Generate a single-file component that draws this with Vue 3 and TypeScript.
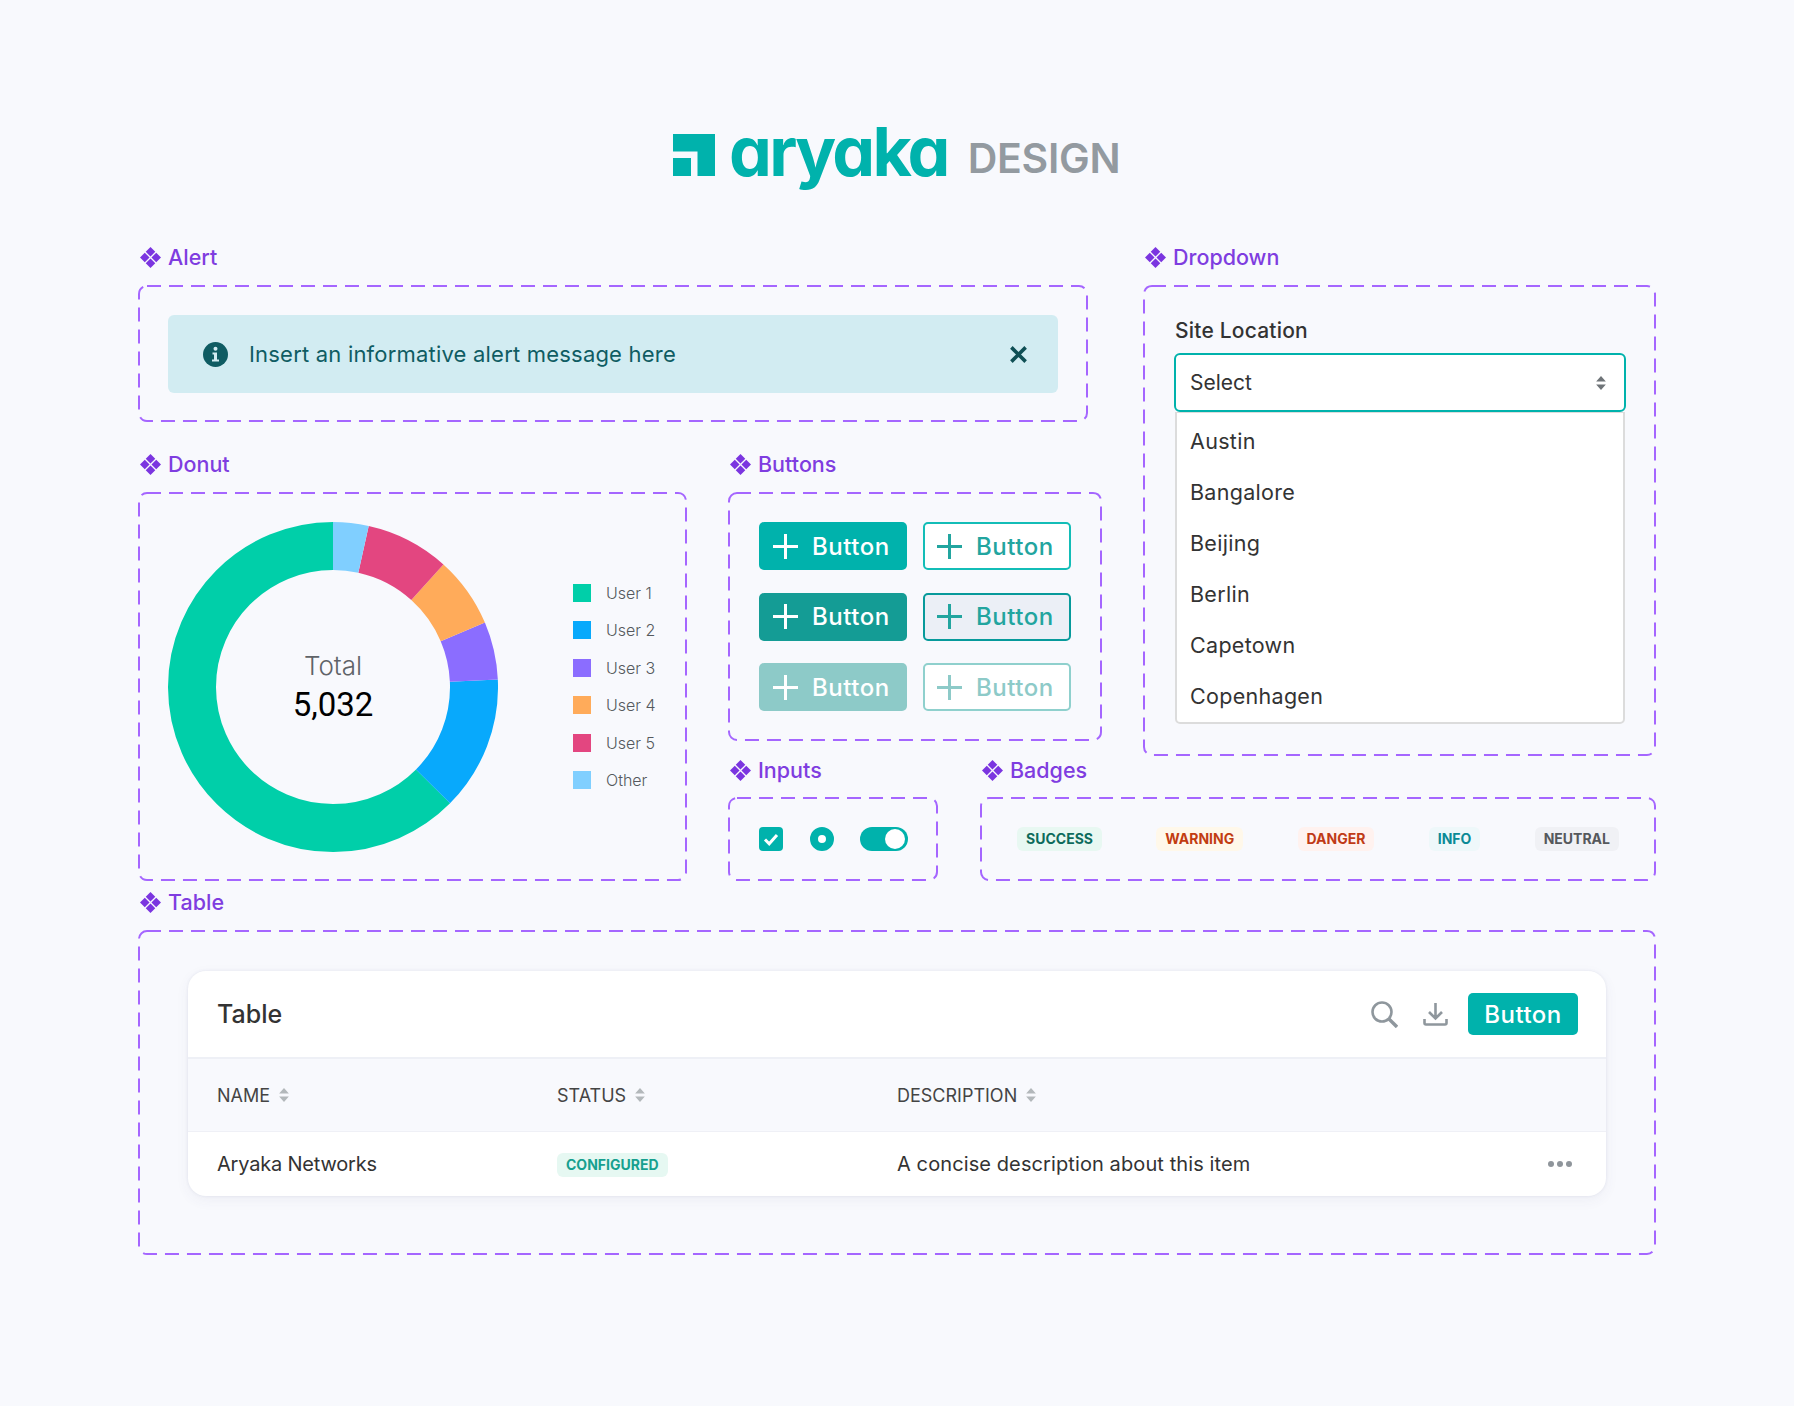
<script setup lang="ts">
interface Slice {
  label: string
  color: string
  start: number
  sweep: number
}

const radius = 141
const circumference = 2 * Math.PI * radius

const slices: Slice[] = [
  { label: 'User 1', color: '#00cfa9', start: 134.8, sweep: 225.2 },
  { label: 'User 2', color: '#08a9fc', start: 87.4, sweep: 47.4 },
  { label: 'User 3', color: '#8b6dff', start: 67, sweep: 20.4 },
  { label: 'User 4', color: '#ffab5a', start: 42, sweep: 25 },
  { label: 'User 5', color: '#e34680', start: 12.5, sweep: 29.5 },
  { label: 'Other', color: '#80cfff', start: 0, sweep: 12.5 },
]

const buttonRows = [
  { solid: 'solid', outline: 'outline' },
  { solid: 'solid hover', outline: 'outline hover' },
  { solid: 'solid disabled', outline: 'outline disabled' },
]

const locations = ['Austin', 'Bangalore', 'Beijing', 'Berlin', 'Capetown', 'Copenhagen']

const badges = [
  { text: 'Success', kind: 'success' },
  { text: 'Warning', kind: 'warning' },
  { text: 'Danger', kind: 'danger' },
  { text: 'Info', kind: 'info' },
  { text: 'Neutral', kind: 'neutral' },
]

const columns = ['Name', 'Status', 'Description']

const dash = (sweep: number) => `${(sweep / 360) * circumference} ${circumference}`
</script>

<template>
  <div class="page">
    <header class="brand">
      <svg class="mark" viewBox="0 0 42 42" aria-hidden="true">
        <path d="M0 0H42V42H24.500V17.500H0Z M0 24H18V42H0Z" fill="#00b2ac" />
      </svg>
      <span class="wordmark">aryaka</span>
      <span class="design">DESIGN</span>
    </header>

    <div class="board">
      <section class="group alert-group">
        <h2 class="label">
          <svg viewBox="0 0 22 22" aria-hidden="true"><path d="M11 0l5 5-5 5-5-5z M5 6l5 5-5 5-5-5z M17 6l5 5-5 5-5-5z M11 12l5 5-5 5-5-5z" /></svg>
          Alert
        </h2>
        <div class="box alert-box">
          <svg class="dash"><rect /></svg>
          <div class="alert">
            <svg class="alert-icon" viewBox="0 0 25 25" aria-hidden="true">
              <circle cx="12.500" cy="12.500" r="12.500" fill="#0f5c63" />
              <circle cx="12.500" cy="6.800" r="2" fill="#d2ecf2" />
              <path d="M9.500 10.500h4.500v7h2v2h-7v-2h2v-5h-1.500z" fill="#d2ecf2" />
            </svg>
            <span class="alert-text">Insert an informative alert message here</span>
            <svg class="alert-close" viewBox="0 0 16 16" aria-hidden="true">
              <path d="M2 2l12 12M14 2L2 14" />
            </svg>
          </div>
        </div>
      </section>

      <section class="group dropdown-group">
        <h2 class="label">
          <svg viewBox="0 0 22 22" aria-hidden="true"><path d="M11 0l5 5-5 5-5-5z M5 6l5 5-5 5-5-5z M17 6l5 5-5 5-5-5z M11 12l5 5-5 5-5-5z" /></svg>
          Dropdown
        </h2>
        <div class="box dropdown-box">
          <svg class="dash"><rect /></svg>
          <div class="field-label">Site Location</div>
          <div class="select">
            <span>Select</span>
            <svg class="select-caret" viewBox="0 0 9 13" aria-hidden="true">
              <path d="M4.500 0L9 5H0z M4.500 13L0 8h9z" />
            </svg>
          </div>
          <ul class="menu">
            <li v-for="location in locations" :key="location">{{ location }}</li>
          </ul>
        </div>
      </section>

      <section class="group donut-group">
        <h2 class="label">
          <svg viewBox="0 0 22 22" aria-hidden="true"><path d="M11 0l5 5-5 5-5-5z M5 6l5 5-5 5-5-5z M17 6l5 5-5 5-5-5z M11 12l5 5-5 5-5-5z" /></svg>
          Donut
        </h2>
        <div class="box donut-box">
          <svg class="dash"><rect /></svg>
          <div class="donut">
            <svg viewBox="0 0 330 330" aria-hidden="true">
              <circle
                v-for="slice in slices"
                :key="slice.label"
                cx="165"
                cy="165"
                :r="radius"
                fill="none"
                stroke-width="48"
                :stroke="slice.color"
                :stroke-dasharray="dash(slice.sweep)"
                :transform="`rotate(${slice.start - 90} 165 165)`"
              />
            </svg>
            <div class="donut-center">
              <span class="donut-title">Total</span>
              <span class="donut-value">5,032</span>
            </div>
          </div>
          <ul class="legend">
            <li v-for="slice in slices" :key="slice.label">
              <i :style="{ background: slice.color }"></i>{{ slice.label }}
            </li>
          </ul>
        </div>
      </section>

      <section class="group buttons-group">
        <h2 class="label">
          <svg viewBox="0 0 22 22" aria-hidden="true"><path d="M11 0l5 5-5 5-5-5z M5 6l5 5-5 5-5-5z M17 6l5 5-5 5-5-5z M11 12l5 5-5 5-5-5z" /></svg>
          Buttons
        </h2>
        <div class="box buttons-box">
          <svg class="dash"><rect /></svg>
          <template v-for="row in buttonRows" :key="row.solid">
            <button :class="['btn', row.solid]">
              <svg viewBox="0 0 25 25" aria-hidden="true"><path d="M12.500 0v25M0 12.500h25" /></svg>
              Button
            </button>
            <button :class="['btn', row.outline]">
              <svg viewBox="0 0 25 25" aria-hidden="true"><path d="M12.500 0v25M0 12.500h25" /></svg>
              Button
            </button>
          </template>
        </div>
      </section>

      <section class="group inputs-group">
        <h2 class="label">
          <svg viewBox="0 0 22 22" aria-hidden="true"><path d="M11 0l5 5-5 5-5-5z M5 6l5 5-5 5-5-5z M17 6l5 5-5 5-5-5z M11 12l5 5-5 5-5-5z" /></svg>
          Inputs
        </h2>
        <div class="box inputs-box">
          <svg class="dash"><rect /></svg>
          <span class="checkbox">
            <svg viewBox="0 0 24 24" aria-hidden="true"><path d="M6 12.500l4.200 4.200L18 8" /></svg>
          </span>
          <span class="radio"></span>
          <span class="toggle"></span>
        </div>
      </section>

      <section class="group badges-group">
        <h2 class="label">
          <svg viewBox="0 0 22 22" aria-hidden="true"><path d="M11 0l5 5-5 5-5-5z M5 6l5 5-5 5-5-5z M17 6l5 5-5 5-5-5z M11 12l5 5-5 5-5-5z" /></svg>
          Badges
        </h2>
        <div class="box badges-box">
          <svg class="dash"><rect /></svg>
          <span v-for="badge in badges" :key="badge.kind" :class="['badge', badge.kind]">{{ badge.text }}</span>
        </div>
      </section>
    </div>

    <section class="group table-group">
      <h2 class="label">
        <svg viewBox="0 0 22 22" aria-hidden="true"><path d="M11 0l5 5-5 5-5-5z M5 6l5 5-5 5-5-5z M17 6l5 5-5 5-5-5z M11 12l5 5-5 5-5-5z" /></svg>
        Table
      </h2>
      <div class="box table-box">
        <svg class="dash"><rect /></svg>
        <div class="card">
          <div class="card-head">
            <span class="card-title">Table</span>
            <svg class="tool search" viewBox="0 0 27 27" aria-hidden="true">
              <circle cx="11" cy="11" r="9.500" />
              <path d="M18 18l8 8" stroke-width="3.400" />
            </svg>
            <svg class="tool download" viewBox="0 0 25 24" aria-hidden="true">
              <path d="M12.500 1v15M6 10l6.500 6.500L19 10" />
              <path d="M1.500 17v4c0 1 .5 1.500 1.500 1.500h19c1 0 1.500-.5 1.500-1.500v-4" />
            </svg>
            <button class="btn solid small">Button</button>
          </div>
          <div class="row head-row">
            <span v-for="column in columns" :key="column" class="head-cell">
              {{ column }}
              <svg viewBox="0 0 9 13" aria-hidden="true"><path d="M4.500 0L9 5H0z M4.500 13L0 8h9z" /></svg>
            </span>
          </div>
          <div class="row body-row">
            <span class="name-cell">Aryaka Networks</span>
            <span><span class="badge configured">Configured</span></span>
            <span class="desc-cell">A concise description about this item</span>
            <span class="dots"><i></i><i></i><i></i></span>
          </div>
        </div>
      </div>
    </section>
  </div>
</template>

<style>
html,
body {
  margin: 0;
  background: #f8f9fd;
}
</style>

<style scoped>
.page {
  box-sizing: border-box;
  width: 1794px;
  height: 1406px;
  padding: 127px 138px 0 138px;
  font-family: Inter, "Liberation Sans", sans-serif;
  color: #333;
}

/* logo */
.brand {
  display: flex;
  align-items: flex-end;
  height: 64px;
  padding-left: 535px;
  margin-bottom: 53px;
}

.mark {
  width: 42px;
  height: 42px;
  margin-bottom: 15px;
}

.wordmark {
  margin-left: 14px;
  margin-bottom: 8px;
  font-size: 68px;
  line-height: 64px;
  font-weight: 700;
  letter-spacing: -2.700px;
  color: #00b2ac;
  font-feature-settings: "cv11";
}

.design {
  margin-left: 20px;
  margin-bottom: 8px;
  font-size: 41px;
  line-height: 50px;
  font-weight: 600;
  letter-spacing: -0.300px;
  color: #939aa0;
}

/* grid of groups */
.board {
  display: grid;
  grid-template-columns: 549px 41px 210px 42px 108px 14px 41px 513px;
  grid-template-rows: 178px 303px 124px;
  row-gap: 16px;
}

.group {
  display: flex;
  flex-direction: column;
  min-width: 0;
}

.alert-group {
  grid-column: 1 / 6;
  grid-row: 1;
}

.dropdown-group {
  grid-column: 8 / 9;
  grid-row: 1 / 3;
  margin-bottom: -15px;
}

.donut-group {
  grid-column: 1 / 2;
  grid-row: 2 / 4;
  margin-top: 13px;
}

.buttons-group {
  grid-column: 3 / 7;
  grid-row: 2;
  margin-top: 13px;
}

.inputs-group {
  grid-column: 3 / 4;
  grid-row: 3;
}

.badges-group {
  grid-column: 5 / 9;
  grid-row: 3;
}

.table-group {
  margin-top: 8px;
  height: 366px;
}

.label {
  display: flex;
  align-items: center;
  gap: 7px;
  height: 26px;
  margin: 0 0 15px;
  font-size: 21.500px;
  font-weight: 500;
  color: #7f3de0;
}

.inputs-group .label,
.badges-group .label {
  margin-bottom: 14px;
}

.label svg {
  width: 21px;
  height: 21px;
  margin-left: 2px;
  fill: #7b35e0;
}

.box {
  position: relative;
  flex: 1;
  box-sizing: border-box;
}

.dash {
  position: absolute;
  inset: 0;
  width: 100%;
  height: 100%;
  pointer-events: none;
}

.dash rect {
  x: 1px;
  y: 1px;
  width: calc(100% - 2px);
  height: calc(100% - 2px);
  rx: 8px;
  fill: none;
  stroke: #a566ff;
  stroke-width: 2;
  stroke-dasharray: 14 8;
}

/* alert */
.alert-box {
  padding: 30px 30px 28px 30px;
}

.alert {
  display: flex;
  align-items: center;
  height: 78px;
  padding: 0 30px 0 35px;
  background: #d2ecf2;
  border-radius: 6px;
  color: #0f5c63;
}

.alert-icon {
  width: 25px;
  height: 25px;
}

.alert-text {
  flex: 1;
  margin-left: 21px;
  font-size: 22px;
  letter-spacing: 0.200px;
}

.alert-close {
  width: 19px;
  height: 19px;
  fill: none;
  stroke: #0f4f55;
  stroke-width: 3;
}

/* dropdown */
.dropdown-box {
  padding: 34px 30px 0 31px;
}

.field-label {
  margin-left: 1px;
  height: 34px;
  font-size: 21px;
  line-height: 24px;
  font-weight: 500;
  letter-spacing: 0.200px;
}

.select {
  display: flex;
  align-items: center;
  justify-content: space-between;
  box-sizing: border-box;
  height: 59px;
  padding: 0 18px 0 14px;
  background: #fff;
  border: 2px solid #00b2ac;
  border-radius: 6px;
  font-size: 21px;
}

.select-caret {
  width: 10px;
  height: 14px;
  fill: #6f7478;
}

.menu {
  box-sizing: border-box;
  list-style: none;
  height: 312px;
  margin: 0 1px;
  padding: 3px 0 0 13px;
  background: #fff;
  border: 2px solid #dcdcdc;
  border-top-width: 1px;
  border-radius: 0 0 5px 5px;
  font-size: 21.500px;
  letter-spacing: 0.300px;
}

.menu li {
  height: 51px;
  line-height: 51px;
}

/* donut */
.donut-box {
  display: flex;
  padding: 30px 0 0 30px;
}

.donut {
  position: relative;
  width: 330px;
  height: 330px;
}

.donut svg {
  display: block;
}

.donut-center {
  position: absolute;
  inset: 0;
  display: flex;
  flex-direction: column;
  align-items: center;
  justify-content: center;
}

.donut-title {
  font-size: 26px;
  line-height: 36px;
  font-weight: 300;
  color: #5f6368;
}

.donut-value {
  font-family: Roboto, sans-serif;
  font-size: 33px;
  line-height: 42px;
  color: #000;
}

.legend {
  list-style: none;
  margin: 52px 0 0 75px;
  padding: 0;
  font-size: 16px;
  font-weight: 300;
  color: #55595d;
}

.legend li {
  display: flex;
  align-items: center;
  height: 37.500px;
}

.legend i {
  width: 18px;
  height: 18px;
  margin-right: 15px;
}

/* buttons */
.buttons-box {
  display: grid;
  grid-template-columns: 148px 148px;
  grid-auto-rows: 48px;
  gap: 22.500px 16px;
  padding: 30px 0 0 31px;
}

.btn {
  display: flex;
  align-items: center;
  box-sizing: border-box;
  padding: 0 0 0 14px;
  border: 0;
  border-radius: 5px;
  font-family: inherit;
  font-size: 24px;
  font-weight: 500;
  letter-spacing: 0.500px;
}

.btn svg {
  width: 25px;
  height: 25px;
  margin-right: 14px;
  fill: none;
  stroke: currentColor;
  stroke-width: 3;
}

.solid {
  background: #00b2ac;
  color: #fff;
}

.solid.hover {
  background: #149c95;
}

.solid.disabled {
  background: #8dcac8;
}

.outline {
  padding-left: 12px;
  background: #fff;
  border: 2px solid #13bdb7;
  color: #22a59f;
}

.outline.hover {
  background: #ebeff6;
  border-color: #079a9b;
}

.outline.disabled {
  border-color: #8fd0cd;
  color: #8dcac8;
}

/* inputs */
.inputs-box {
  display: flex;
  align-items: center;
  gap: 26.500px;
  padding: 0 0 0 31px;
}

.checkbox {
  width: 24px;
  height: 24px;
  background: #00b2ac;
  border-radius: 4px;
}

.checkbox svg {
  display: block;
  fill: none;
  stroke: #fff;
  stroke-width: 3;
}

.radio {
  box-sizing: border-box;
  width: 24px;
  height: 24px;
  background: #fff;
  border: 8px solid #00b2ac;
  border-radius: 50%;
}

.toggle {
  position: relative;
  width: 48px;
  height: 24px;
  background: #00b2ac;
  border-radius: 12px;
}

.toggle::after {
  content: "";
  position: absolute;
  top: 2px;
  right: 3px;
  width: 20px;
  height: 20px;
  background: #fff;
  border-radius: 50%;
}

/* badges */
.badges-box {
  display: flex;
  align-items: center;
  justify-content: space-between;
  padding: 0 37px 0 37px;
}

.badge {
  display: inline-block;
  box-sizing: border-box;
  height: 24px;
  padding: 0 9px;
  border-radius: 6px;
  font-size: 14px;
  line-height: 24px;
  font-weight: 700;
  text-transform: uppercase;
}

.success {
  background: #e8f8f2;
  color: #0d6b5b;
}

.warning {
  background: #fff8ea;
  color: #c23d12;
}

.danger {
  background: #fff2ef;
  color: #c03a16;
}

.info {
  background: #eef8fa;
  color: #0b8a96;
}

.neutral {
  background: #f0f1f5;
  color: #55585c;
}

.configured {
  background: #e6f8f2;
  color: #17a08f;
}

/* table */
.table-box {
  padding: 41px 50px 0 50px;
}

.card {
  overflow: hidden;
  background: #fff;
  border-radius: 18px;
  box-shadow: 0 0 3px rgba(60, 70, 120, 0.1), 0 4px 14px rgba(60, 70, 120, 0.06);
}

.card-head {
  display: flex;
  align-items: center;
  box-sizing: border-box;
  height: 88px;
  padding: 0 28px 0 29px;
  border-bottom: 2px solid #eef0f6;
}

.card-title {
  flex: 1;
  font-size: 25px;
  font-weight: 500;
}

.tool {
  fill: none;
  stroke: #8f979d;
  stroke-width: 2.600;
}

.search {
  width: 27px;
  height: 27px;
  margin-right: 25px;
}

.download {
  width: 25px;
  height: 24px;
  margin-right: 20px;
}

.btn.small {
  width: 110px;
  height: 42px;
  justify-content: center;
  padding: 0;
}

.row {
  display: grid;
  grid-template-columns: 340px 340px 1fr auto;
  align-items: center;
  padding: 0 34px 0 29px;
}

.head-row {
  height: 72px;
  background: #f8f9fd;
  border-bottom: 1px solid #eff0f6;
  font-size: 18px;
  color: #444;
}

.head-cell {
  display: flex;
  align-items: center;
  gap: 9px;
  text-transform: uppercase;
}

.head-cell svg {
  width: 10px;
  height: 14px;
  fill: #b3b8bb;
}

.body-row {
  height: 64px;
  font-size: 20px;
}

.name-cell {
  letter-spacing: -0.200px;
}

.desc-cell {
  letter-spacing: 0.100px;
}

.dots {
  display: flex;
  gap: 3px;
}

.dots i {
  width: 6px;
  height: 6px;
  background: #8f959b;
  border-radius: 50%;
}
</style>
